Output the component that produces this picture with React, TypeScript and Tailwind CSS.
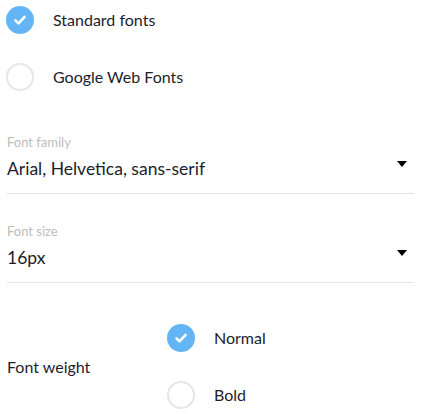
import { useState } from "react";

const FONT = { fontFamily: "Lato, 'Open Sans', sans-serif" };

function Radio({ checked }: { checked: boolean }) {
  return checked ? (
    <span className="flex h-[28px] w-[28px] shrink-0 items-center justify-center rounded-full bg-[#64b5f6]">
      <svg width="14" height="14" viewBox="0 0 14 14" fill="none">
        <path d="M2.5 7.3l3 3 6-6.3" stroke="white" strokeWidth="2.6" strokeLinecap="round" strokeLinejoin="round" />
      </svg>
    </span>
  ) : (
    <span className="block h-[28px] w-[28px] shrink-0 rounded-full border-2 border-[#e6e6e6] bg-white" />
  );
}

function Option({ label, checked, onClick }: { label: string; checked: boolean; onClick: () => void }) {
  return (
    <button type="button" onClick={onClick} className="flex items-center gap-[19px] text-left">
      <Radio checked={checked} />
      <span className="text-[16px] text-[#1d1d2b]">{label}</span>
    </button>
  );
}

function SelectField({ label, value }: { label: string; value: string }) {
  return (
    <div className="mx-[7px] border-b border-[#e3e3e3] pb-[12px]">
      <div className="text-[13px] leading-[18px] text-[#bdbdbd]">{label}</div>
      <div className="mt-[6px] flex items-start justify-between">
        <span className="text-[17.5px] leading-[24px] text-[#1d1d2b]">{value}</span>
        <svg width="10" height="6" viewBox="0 0 10 6" className="mr-[7px] mt-[4px]">
          <path d="M0 0h10L5 6z" fill="#000" />
        </svg>
      </div>
    </div>
  );
}

export default function App() {
  const [source, setSource] = useState("standard");
  const [weight, setWeight] = useState("normal");

  return (
    <div className="h-[414px] w-[421px] bg-white" style={FONT}>
      <div className="flex flex-col gap-[29px] pl-[6px] pt-[6px]">
        <Option label="Standard fonts" checked={source === "standard"} onClick={() => setSource("standard")} />
        <Option label="Google Web Fonts" checked={source === "google"} onClick={() => setSource("google")} />
      </div>

      <div className="mt-[42px]">
        <SelectField label="Font family" value="Arial, Helvetica, sans-serif" />
      </div>
      <div className="mt-[28px]">
        <SelectField label="Font size" value="16px" />
      </div>

      <div className="mt-[41px] flex items-center">
        <div className="w-[167px] pl-[7px] text-[16px] text-[#1d1d2b]">Font weight</div>
        <div className="flex flex-col gap-[29px]">
          <Option label="Normal" checked={weight === "normal"} onClick={() => setWeight("normal")} />
          <Option label="Bold" checked={weight === "bold"} onClick={() => setWeight("bold")} />
        </div>
      </div>
    </div>
  );
}
